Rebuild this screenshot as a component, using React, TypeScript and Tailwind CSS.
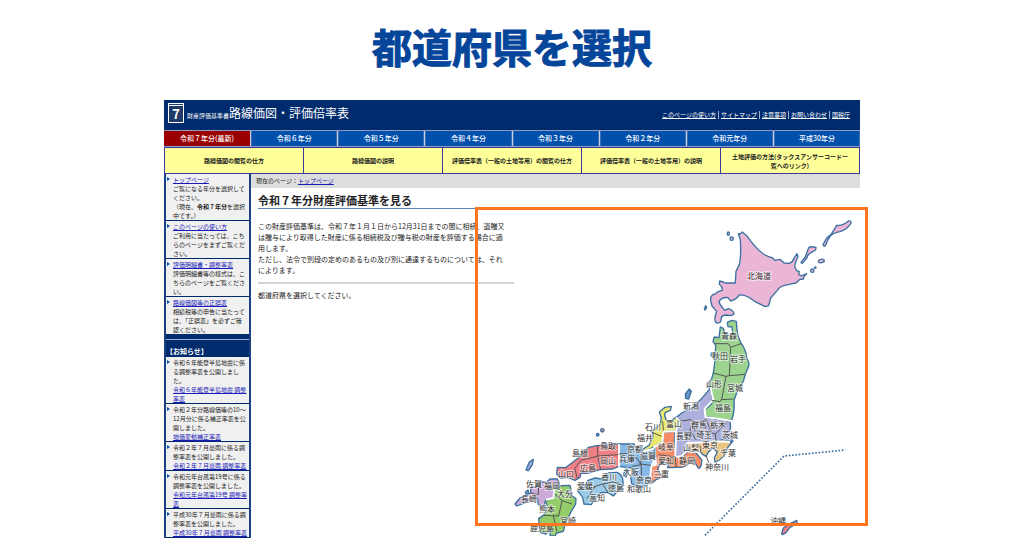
import { Fragment } from 'react';

type Item = { lines: string[]; link: string[]; linkFirst?: boolean };

const years = ['令和７年分(最新)', '令和６年分', '令和５年分', '令和４年分', '令和３年分', '令和２年分', '令和元年分', '平成30年分'];

const guides = [
  ['路線価図の閲覧の仕方'],
  ['路線価図の説明'],
  ['評価倍率表（一般の土地等用）の閲覧の仕方'],
  ['評価倍率表（一般の土地等用）の説明'],
  ['土地評価の方法(タックスアンサーコードー', '覧へのリンク)'],
];

const headerLinks = ['このページの使い方', 'サイトマップ', '注意事項', 'お問い合わせ', '国税庁'];

const menu: Item[] = [
  { linkFirst: true, link: ['トップページ'], lines: ['ご覧になる年分を選択して', 'ください。', '（現在、*令和７年分*を選択', '中です。）'] },
  { linkFirst: true, link: ['このページの使い方'], lines: ['ご利用に当たっては、こち', 'らのページをまずご覧くだ', 'さい。'] },
  { linkFirst: true, link: ['評価明細書・調整率表'], lines: ['評価明細書等の様式は、こ', 'ちらのページをご覧くださ', 'い。'] },
  { linkFirst: true, link: ['路線価図等の正誤表'], lines: ['相続税等の申告に当たって', 'は、「正誤表」を必ずご確', '認ください。'] },
];

const news: Item[] = [
  { lines: ['令和６年能登半島地震に係', 'る調整率表を公開しまし', 'た。'], link: ['令和６年能登半島地震 調整', '率表'] },
  { lines: ['令和２年分路線価等の10～', '12月分に係る補正率表を公', '開しました。'], link: ['地価変動補正率表'] },
  { lines: ['令和２年７月豪雨に係る調', '整率表を公開しました。'], link: ['令和２年７月豪雨 調整率表'] },
  { lines: ['令和元年台風第19号に係る', '調整率表を公開しました。'], link: ['令和元年台風第19号 調整率', '表'] },
  { lines: ['平成30年７月豪雨に係る調', '整率表を公開しました。'], link: ['平成30年７月豪雨 調整率表'] },
];

// [name, centre x, centre y]
const prefectures: [string, number, number][] = [
  ['北海道', 759, 278], ['青森', 729, 338], ['秋田', 720, 358], ['岩手', 738, 361], ['山形', 714, 386],
  ['宮城', 735, 390], ['福島', 723, 410], ['新潟', 691, 408], ['石川', 653, 429], ['富山', 674, 426],
  ['群馬', 699, 427], ['栃木', 718, 427], ['福井', 645, 440], ['長野', 684, 438], ['埼玉', 704, 437],
  ['茨城', 730, 437], ['山梨', 691, 450], ['東京', 710, 447], ['千葉', 728, 455], ['岐阜', 666, 449],
  ['愛知', 666, 463], ['静岡', 687, 463], ['神奈川', 717, 469], ['京都', 635, 451], ['兵庫', 627, 461],
  ['滋賀', 648, 458], ['三重', 661, 476], ['大阪', 631, 474], ['奈良', 644, 482], ['和歌山', 639, 491],
  ['鳥取', 608, 448], ['島根', 580, 455], ['岡山', 608, 463], ['広島', 588, 470], ['山口', 566, 476],
  ['香川', 609, 479], ['愛媛', 585, 488], ['徳島', 616, 490], ['高知', 597, 500], ['佐賀', 534, 486],
  ['福岡', 552, 488], ['長崎', 529, 501], ['大分', 565, 496], ['熊本', 547, 511], ['宮崎', 568, 523],
  ['鹿児島', 542, 530], ['沖縄', 778, 523],
];

function Lines({ lines }: { lines: string[] }) {
  return (
    <>
      {lines.map((line, i) => (
        <Fragment key={line}>
          {i > 0 && <br />}
          {line.split('*').map((part, n) => (n % 2 ? <b key={n}>{part}</b> : part))}
        </Fragment>
      ))}
    </>
  );
}

function SideList({ items }: { items: Item[] }) {
  return (
    <ul className="bg-[#f0f0f0] text-[6px] leading-[9px] whitespace-nowrap text-[#222]">
      {items.map((item) => {
        const link = (
          <a href="#" className="text-[#1a1ab8] underline">
            <Lines lines={item.link} />
          </a>
        );
        return (
          <li key={item.link[0]} className="flex gap-[3px] border-b border-[#002b6c] pt-px pl-px">
            <svg viewBox="0 0 3 4" className="mt-[2px] h-1 w-[3px] shrink-0" aria-hidden="true">
              <path d="M0 0L3 2L0 4Z" fill="#0050ac" />
            </svg>
            <div>
              {item.linkFirst && <>{link}<br /></>}
              <Lines lines={item.lines} />
              {!item.linkFirst && <><br />{link}</>}
            </div>
          </li>
        );
      })}
    </ul>
  );
}

function JapanMap() {
  return (
    <svg viewBox="500 190 360 348" className="h-[348px] w-[360px] justify-self-end [grid-area:1/1]" role="img" aria-label="日本地図">
      <g stroke="#3c70a0" strokeWidth="4" strokeLinejoin="round">
        {/* Hokkaido and the northern islands */}
        <g transform="translate(680 205) scale(.33333)" fill="#ebb5d6">
          <path d="M175 92L180 94L187 87L200 98L215 118Q232 140 250 153Q268 163 278 165L284 172L300 169L312 180L328 181Q338 178 342 166L351 152L354 160L346 180L344 192L350 203L358 206L356 214L364 219L380 212L372 220L370 228L358 230L348 240L338 242L325 245Q300 248 292 262L272 285L266 308L257 311Q228 300 205 282Q190 275 178 276Q168 290 152 294L144 284Q128 281 118 294Q116 303 128 314L134 322L145 317Q162 324 162 333Q156 340 138 336Q124 338 124 345L122 356Q112 364 107 357Q101 350 110 325L96 309L92 292Q90 282 97 276Q110 272 114 266L127 262Q128 252 118 244L119 234Q126 235 137 240L166 240L168 205L178 185Q184 160 181 110Z" />
          <path d="M363 178L376 162L386 134Q392 129 408 133L407 141L393 149Q382 154 380 166L366 182Z" />
          <path d="M429 125L441 104L455 92L470 67Q486 70 505 54Q514 52 513 60Q504 78 480 86Q458 90 450 100Q442 112 438 124Q432 135 429 125Z" />
          <ellipse cx="424" cy="174" rx="9" ry="5" transform="rotate(-12 424 174)" />
          <circle cx="397" cy="203" r="5" />
          <circle cx="406" cy="194" r="2" />
          <ellipse cx="145" cy="92" rx="3" ry="5" />
          <circle cx="155" cy="107" r="5" />
          <path d="M73 317L77 308L80 314L75 321Z" />
        </g>

        {/* Tohoku, Kanto and Chubu */}
        <g transform="translate(620 315) scale(.33333)">
          <path d="M272 225L278 262L255 285L258 310L290 318L330 324L332 342Q326 355 330 368L339 385L310 383L262 388L215 390L200 392L198 412L184 430L166 432L165 400L168 350L178 330L160 320L185 300L215 285L240 262L255 245Z" fill="#adb0dc" />
          <path d="M322 28L335 22L349 25L351 50L354 70L364 92Q378 110 380 135Q389 150 386 160L376 184L370 205Q354 225 350 240L342 262Q345 290 336 320Q320 325 300 320L284 315L256 310L254 290L272 276L280 260L276 238L262 216Q266 205 274 200L280 180L286 135L273 128L274 120L286 122L287 97L279 85L283 72L297 74L301 42L310 46L314 60L330 68L338 62L336 42L324 41Z" fill="#9bd38f" />
          <path d="M196 243L208 228L214 235L206 258L197 256Z" fill="#6695c4" />
          <path d="M118 297L135 283L154 280L151 292L135 299Q132 310 140 322L152 324L168 313L180 322L167 352L130 357L127 387L105 400L75 415L68 409L88 396L99 372L98 355L121 333L124 314Z" fill="#e7e76d" />
          <path d="M130 358L165 355L163 385L168 430L186 432L205 415L228 420L245 440Q246 462 236 466L226 452L225 440L205 450Q196 464 180 463L142 464L147 452L126 447L114 464Q114 480 130 492L108 500L96 510L90 500L88 462L108 455L105 402L128 390Z" fill="#f68c67" />
          <path d="M200 390L262 388L285 385L310 380L336 388L324 402L313 428Q298 444 285 447L283 435L292 417L278 405L266 416L258 430L248 424L240 415L208 415Z" fill="#e9c583" />
          <g fill="none" stroke="#fff" strokeWidth="6">
            <path d="M272 225L280 260L254 287L256 312L285 316L336 324M200 390L262 388L285 385L330 386M168 313L180 326L168 352L166 432L184 430L200 414V390M130 356L167 354M130 356L127 389L103 402L108 455L90 460M200 414L240 418" />
          </g>
          <g fill="none" stroke="#555" strokeWidth="3">
            <path d="M285 92H325L332 103L363 92M332 103L328 188L376 184M280 180L318 190L328 188M318 190L305 260L340 258M275 262L300 266L305 258" />
            <path d="M178 325L212 320L228 332L258 320L276 360L286 363L322 328M212 340L210 352L228 380M228 332L222 350L276 360M286 363L288 385" />
            <path d="M90 355L124 370M128 325L130 352M116 425L166 432L168 462M232 393L244 405L240 415M258 428L267 450" />
          </g>
        </g>

        {/* Western Japan */}
        <g transform="translate(500 400) scale(.33333)">
          <path d="M357 138L402 138L408 150L430 160L462 152L466 180L454 206L450 250L438 264L418 268L395 258L392 235L402 222L395 210L357 205Z" fill="#86b9e6" />
          <path d="M376 214L385 220L378 237L370 232Z" fill="#86b9e6" />
          <path d="M172 208L196 209L218 193L245 172L265 148L290 143L357 138V205L338 213L300 215L262 226L243 225L240 238L225 247L206 239L182 240L170 228Z" fill="#ee7f84" />
          <path d="M232 278L250 272L264 247L285 240L306 243L325 225L350 223Q364 228 368 242L370 262L352 280L340 294L323 283L302 284L286 300L274 320L252 318L248 298Z" fill="#9acbe8" />
          <path d="M45 318L60 300L75 293L92 285L92 270L108 265L115 252L140 252L150 243L172 243L178 255L164 275L160 300L137 305L133 322L115 320L112 298L94 300L78 313L50 324Z" fill="#ccaad9" />
          <path d="M164 272L185 263L210 262L213 274L203 280L212 290L228 302L227 318L214 340L195 380L190 400L170 405L165 414L150 414L152 392L138 408L122 404L118 385L116 362L133 350L142 328L137 308L160 300Z" fill="#93cc68" />
          <path d="M78 216L88 192L100 184L97 200L85 218Z" fill="#9dacdc" />
          <path d="M76 282L84 276L86 285L79 290Z" fill="#9dacdc" />
          <circle cx="307" cy="97" r="5" fill="#ee7f84" />
          <circle cx="293" cy="110" r="4" fill="#6695c4" />
          <path d="M357 138V206M430 160L462 152M466 178L454 206L450 252M164 272L160 300L137 305" fill="none" stroke="#fff" strokeWidth="6" />
          <g fill="none" stroke="#555" strokeWidth="3">
            <path d="M292 143L294 174L264 182L244 186L224 212L232 240M294 174L355 170M294 178L302 214" />
            <path d="M384 138L386 166L414 184L424 204L424 232L410 262M395 205L424 200M424 170L422 198L452 202M357 168L386 166" />
            <path d="M260 302L286 265L308 258L340 252L362 258M308 258L325 285M262 274L286 265" />
            <path d="M164 288L186 308L216 318M186 308L176 354L132 352M160 354L166 378L192 382M92 285L115 290L116 262M166 378L170 400" />
          </g>
        </g>

        {/* Okinawa inset */}
        <g transform="translate(680 430) scale(.33333)">
          <path d="M305 318L310 300L325 290L350 277L352 286L330 298L318 314L308 320Z" fill="#ee7f84" />
          <path d="M75 322L312 84L496 66" fill="none" strokeWidth="5" strokeDasharray="5 5" />
        </g>
      </g>

      <g
        fontSize="8"
        fill="#333"
        stroke="#fff"
        strokeOpacity="0.6"
        strokeWidth="2"
        strokeLinejoin="round"
        paintOrder="stroke"
        textAnchor="middle"
      >
        {prefectures.map(([name, x, y]) => (
          <text key={name} x={x} y={y + 3}>{name}</text>
        ))}
      </g>
    </svg>
  );
}

export default function App() {
  return (
    <div lang="ja" className="h-screen overflow-hidden bg-white font-['Noto_Sans_CJK_JP',sans-serif] text-[#222]">
      <h1 className="flex h-[100px] items-center justify-center pb-2 text-[40px] leading-none font-bold text-[#05469b] [-webkit-text-stroke:1px_#05469b]">
        都道府県を選択
      </h1>

      <div className="relative mx-auto max-w-[696px]">
        <header className="flex h-[30px] items-center justify-between bg-[#002b6c] px-1 text-white">
          <div className="flex items-center pb-1">
            <svg viewBox="0 0 16 20" className="mr-[3px] h-5 w-4" aria-hidden="true">
              <rect x=".5" y=".5" width="15" height="19" fill="#1d3a68" stroke="#fff" />
              <path d="M0 2.5H16" stroke="#fff" />
              <text x="8" y="16" fontSize="13" fontWeight="700" fill="#fff" textAnchor="middle">7</text>
            </svg>
            <span className="pt-1 text-[6px]">財産評価基準書</span>
            <span className="text-[12px] leading-none">路線価図・評価倍率表</span>
          </div>
          <nav className="flex pr-1 text-[6px] leading-[8px]">
            {headerLinks.map((label) => (
              <a key={label} href="#" className="border-l border-[#9fb0d0] px-[2px] underline first:border-l-0">
                {label}
              </a>
            ))}
          </nav>
        </header>

        <nav className="grid h-[17px] grid-cols-8 gap-px border-y border-[#8c9cc6] bg-[#c4cfe6] text-[7px] font-medium text-white">
          {years.map((year) => (
            <a
              key={year}
              href="#"
              className="flex items-center justify-center border-x border-[#3d6db4] bg-[#0050ac] first:border-[#990000] first:bg-[#990000]"
            >
              {year}
            </a>
          ))}
        </nav>

        <nav className="grid h-[27px] grid-cols-5 gap-px border border-[#3a3a9c] bg-[#3a3a9c] text-center text-[6px] leading-[9px] font-bold text-[#222]">
          {guides.map((lines) => (
            <a key={lines[0]} href="#" className="flex items-center justify-center bg-[#ffff99]">
              <span><Lines lines={lines} /></span>
            </a>
          ))}
        </nav>

        <div className="flex items-start">
          <aside className="w-[87px] shrink-0 border-x-2 border-[#1d4080] bg-[#002b6c]">
            <SideList items={menu} />
            <h2 className="mt-1 border-t border-[#9fb0d0] pt-[6px] pb-px text-[7px] leading-[10px] font-bold text-white">【お知らせ】</h2>
            <SideList items={news} />
          </aside>

          <main className="min-w-0 grow">
            <p className="h-[14px] bg-[#dddddd] px-[5px] text-[6px] leading-[14px]">
              現在のページ：
              <a href="#" className="text-[#1a1ab8] underline">トップページ</a>
            </p>
            <div className="grid">
              <div className="pl-[7px] text-[7px] leading-[11px] [grid-area:1/1]">
                <h2 className="border-b border-[#5b82b8] pt-1 text-[11px] leading-4 font-bold">令和７年分財産評価基準を見る</h2>
                <p className="pt-3">
                  この財産評価基準は、令和７年１月１日から12月31日までの間に相続、遺贈又<br />
                  は贈与により取得した財産に係る相続税及び贈与税の財産を評価する場合に適<br />
                  用します。<br />
                  ただし、法令で別段の定めのあるもの及び別に通達するものについては、それ<br />
                  によります。
                </p>
                <hr className="my-[6px] w-64 border-t-2 border-[#d4d4d4]" />
                <p>都道府県を選択してください。</p>
              </div>
              <JapanMap />
            </div>
          </main>
        </div>

        {/* Highlight over the map */}
        <div className="pointer-events-none absolute top-[107px] -right-2 h-[319px] w-[393px] border-[3px] border-[#ff751f]" />
      </div>
    </div>
  );
}
